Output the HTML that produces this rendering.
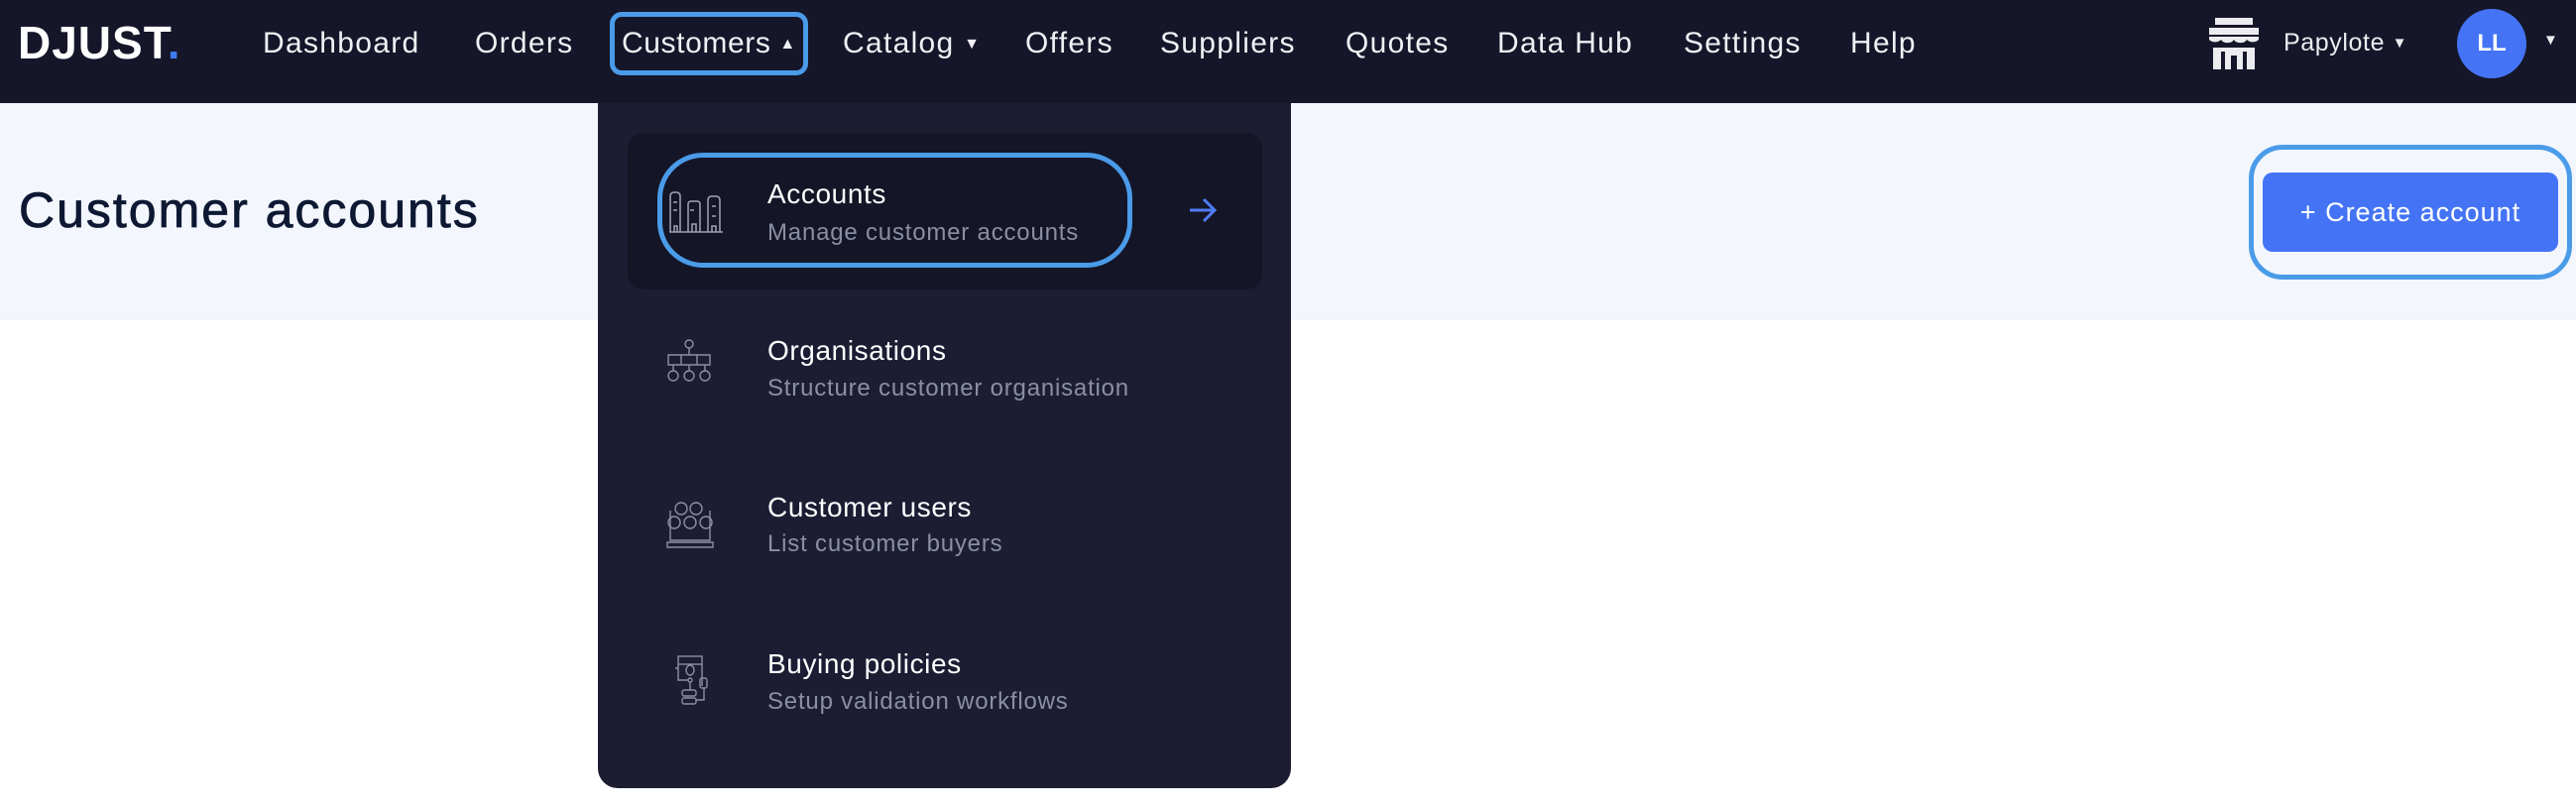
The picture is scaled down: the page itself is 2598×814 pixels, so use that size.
<!DOCTYPE html>
<html><head><meta charset="utf-8"><style>
*{margin:0;padding:0;box-sizing:border-box}
body{width:2598px;height:814px;background:#fff;font-family:"Liberation Sans",sans-serif;position:relative;overflow:hidden}
.hdr{position:absolute;left:0;top:0;width:2598px;height:104px;background:#151629}
.abs{position:absolute;white-space:nowrap}
.nav{color:#f0f0f4;font-size:30px;top:27px;letter-spacing:1.3px}
.band{position:absolute;left:0;top:104px;width:2598px;height:219px;background:#f3f6fd}
.dd{position:absolute;left:603px;top:104px;width:699px;height:691px;background:#1c1d33;border-radius:0 0 20px 20px}
.t{color:#fff;font-size:28px;letter-spacing:0.6px}
.s{color:#8b8fa5;font-size:24px;letter-spacing:0.8px}
</style></head><body>
<div class="hdr"></div>
<div class="abs" style="left:18px;top:16px;font-size:46px;font-weight:bold;color:#fff;letter-spacing:1px">DJUST<span style="color:#3f7cf0">.</span></div>
<div class="abs nav" style="left:265px">Dashboard</div>
<div class="abs nav" style="left:479px">Orders</div>
<div class="abs" style="left:615px;top:12px;width:200px;height:64px;border:5px solid #4a9be8;border-radius:12px"></div>
<div class="abs nav" style="left:627px;letter-spacing:0.6px">Customers <span style="font-size:16px;vertical-align:4px">▲</span></div>
<div class="abs nav" style="left:850px">Catalog <span style="font-size:16px;vertical-align:4px">▼</span></div>
<div class="abs nav" style="left:1034px">Offers</div>
<div class="abs nav" style="left:1170px">Suppliers</div>
<div class="abs nav" style="left:1357px">Quotes</div>
<div class="abs nav" style="left:1510px">Data Hub</div>
<div class="abs nav" style="left:1698px">Settings</div>
<div class="abs nav" style="left:1866px">Help</div>
<svg class="abs" style="left:2228px;top:18px" width="50" height="52" viewBox="0 0 50 52"><rect x="6" y="0" width="38" height="7" fill="#ececf0"/><rect x="0" y="10" width="50" height="7" fill="#ececf0"/><path d="M0 19h50v3a7 5 0 0 1-12 0a7 5 0 0 1-13 0a7 5 0 0 1-13 0a7 5 0 0 1-12 0z" fill="#ececf0"/><path d="M4 30h42v22h-8v-18h-26v18h-8z" fill="#ececf0"/><rect x="16" y="34" width="18" height="18" fill="#ececf0"/><rect x="22" y="38" width="6" height="14" fill="#151629"/></svg>
<div class="abs" style="left:2303px;top:29px;color:#ececf0;font-size:25px;letter-spacing:0.6px">Papylote <span style="font-size:15px;vertical-align:3px">▼</span></div>
<div class="abs" style="left:2478px;top:9px;width:70px;height:70px;border-radius:50%;background:#4474f5;color:#fff;font-weight:bold;font-size:24px;text-align:center;line-height:70px">LL</div>
<div class="abs" style="left:2565px;top:32px;color:#ececf0;font-size:15px">▼</div>
<div class="band"></div>
<div class="abs" style="left:19px;top:183px;font-size:50px;color:#0d1833;letter-spacing:2px;-webkit-text-stroke:0.8px #0d1833">Customer accounts</div>
<div class="abs" style="left:2268px;top:146px;width:326px;height:136px;border:5px solid #4a9be8;border-radius:34px"></div>
<div class="abs" style="left:2282px;top:174px;width:298px;height:80px;background:#4474f5;border-radius:10px;color:#fff;font-size:27px;text-align:center;line-height:80px;letter-spacing:1px">+ Create account</div>
<div class="dd"></div>
<div class="abs" style="left:633px;top:134px;width:640px;height:158px;background:#141527;border-radius:16px"></div>
<div class="abs" style="left:663px;top:154px;width:479px;height:116px;border:5px solid #4a9be8;border-radius:46px"></div>
<svg class="abs" style="left:674px;top:192px" width="56" height="44" viewBox="0 0 56 44" fill="none" stroke="#a0a3b5" stroke-width="1.5"><path d="M2 42V6q0-4 4-4h2q4 0 4 4v36M20 42V14q0-3 3-3h6q3 0 3 3v28M40 42V10q0-4 4-4h4q4 0 4 4v32M1 42h54M5 12h4M5 20h4M22 20h4M44 16h4M44 26h4M24 42v-8h4v8M6 42v-6h3v6M44 42v-6h4v6"/></svg>
<div class="abs t" style="left:774px;top:180px">Accounts</div>
<div class="abs s" style="left:774px;top:221px">Manage customer accounts</div>
<svg class="abs" style="left:1198px;top:198px" width="30" height="28" viewBox="0 0 30 28" fill="none" stroke="#4f7cf5" stroke-width="3"><path d="M2 14h25M16 3l11 11-11 11"/></svg>
<svg class="abs" style="left:672px;top:342px" width="46" height="58" viewBox="0 0 46 58" fill="none" stroke="#8b8fa5" stroke-width="1.4"><circle cx="23" cy="5" r="4"/><path d="M23 9v7M2 16h42v10H2zM15 16v10M31 16v10M7 26v6M23 26v6M39 26v6"/><circle cx="7" cy="37" r="5"/><circle cx="23" cy="37" r="5"/><circle cx="39" cy="37" r="5"/></svg>
<div class="abs t" style="left:774px;top:338px">Organisations</div>
<div class="abs s" style="left:774px;top:378px">Structure customer organisation</div>
<svg class="abs" style="left:672px;top:505px" width="48" height="50" viewBox="0 0 48 50" fill="none" stroke="#8b8fa5" stroke-width="1.4"><circle cx="15" cy="8" r="6"/><circle cx="30" cy="8" r="6"/><circle cx="8" cy="22" r="6"/><circle cx="24" cy="22" r="6"/><circle cx="40" cy="22" r="6"/><path d="M4 10v30h40V10M1 42h46v5H1z"/></svg>
<div class="abs t" style="left:774px;top:496px">Customer users</div>
<div class="abs s" style="left:774px;top:535px">List customer buyers</div>
<svg class="abs" style="left:680px;top:660px" width="36" height="54" viewBox="0 0 36 54" fill="none" stroke="#8b8fa5" stroke-width="1.4"><rect x="4" y="2" width="24" height="8"/><path d="M4 10v16h10M28 10v22M1 14h3"/><ellipse cx="16" cy="16" rx="4" ry="5"/><circle cx="16" cy="26" r="2"/><rect x="26" y="24" width="7" height="10" rx="2"/><path d="M16 28v8M30 34v12h-8"/><rect x="8" y="36" width="14" height="6" rx="2"/><rect x="8" y="44" width="14" height="6" rx="2"/></svg>
<div class="abs t" style="left:774px;top:654px">Buying policies</div>
<div class="abs s" style="left:774px;top:694px">Setup validation workflows</div>
</body></html>
